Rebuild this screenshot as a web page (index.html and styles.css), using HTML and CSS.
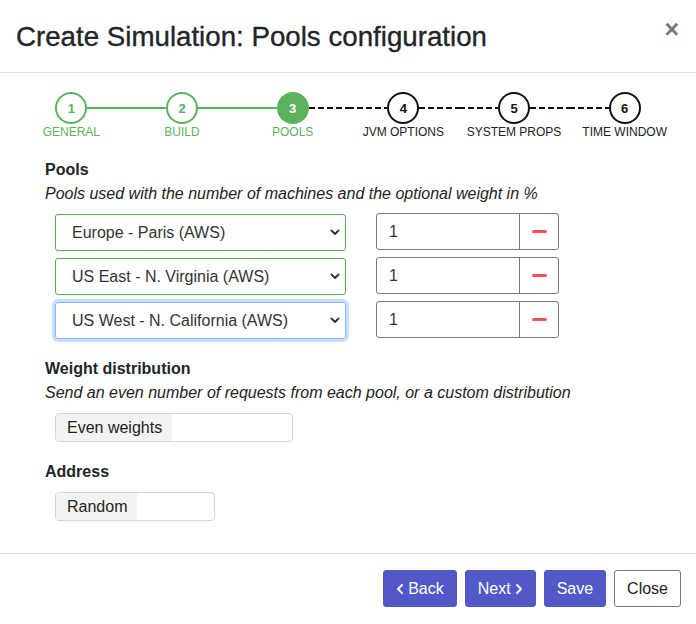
FILE: index.html
```html
<!DOCTYPE html>
<html>
<head>
<meta charset="utf-8">
<link rel="stylesheet" href="styles.css">
</head>
<body>
<div class="modal">
  <div class="modal-header">
    <h1 class="modal-title">Create Simulation: Pools configuration</h1>
    <span class="close">×</span>
  </div>
  <div class="modal-body">
    <div class="stepper">
      <div class="step done">
        <div class="track"><span class="ln none"></span><span class="circle">1</span><span class="ln solid"></span></div>
        <div class="label">GENERAL</div>
      </div>
      <div class="step done">
        <div class="track"><span class="ln solid"></span><span class="circle">2</span><span class="ln solid"></span></div>
        <div class="label">BUILD</div>
      </div>
      <div class="step active">
        <div class="track"><span class="ln solid"></span><span class="circle">3</span><span class="ln dash"></span></div>
        <div class="label">POOLS</div>
      </div>
      <div class="step">
        <div class="track"><span class="ln dash"></span><span class="circle">4</span><span class="ln dash"></span></div>
        <div class="label">JVM OPTIONS</div>
      </div>
      <div class="step">
        <div class="track"><span class="ln dash"></span><span class="circle">5</span><span class="ln dash"></span></div>
        <div class="label">SYSTEM PROPS</div>
      </div>
      <div class="step">
        <div class="track"><span class="ln dash"></span><span class="circle">6</span><span class="ln none"></span></div>
        <div class="label">TIME WINDOW</div>
      </div>
    </div>

    <div class="form">
      <div class="section-title">Pools</div>
      <div class="section-help">Pools used with the number of machines and the optional weight in %</div>
      <div class="pool-rows">
        <div class="pool-row">
          <div class="select valid"><span>Europe - Paris (AWS)</span><svg class="chev" width="10" height="7" viewBox="0 0 10 7"><polyline points="1.5,1.5 5,5 8.5,1.5" fill="none" stroke="#333" stroke-width="1.8" stroke-linecap="round" stroke-linejoin="round"/></svg></div>
          <div class="input-group"><div class="num">1</div><div class="remove"><span class="minus"></span></div></div>
        </div>
        <div class="pool-row">
          <div class="select valid"><span>US East - N. Virginia (AWS)</span><svg class="chev" width="10" height="7" viewBox="0 0 10 7"><polyline points="1.5,1.5 5,5 8.5,1.5" fill="none" stroke="#333" stroke-width="1.8" stroke-linecap="round" stroke-linejoin="round"/></svg></div>
          <div class="input-group"><div class="num">1</div><div class="remove"><span class="minus"></span></div></div>
        </div>
        <div class="pool-row">
          <div class="select focus"><span>US West - N. California (AWS)</span><svg class="chev" width="10" height="7" viewBox="0 0 10 7"><polyline points="1.5,1.5 5,5 8.5,1.5" fill="none" stroke="#333" stroke-width="1.8" stroke-linecap="round" stroke-linejoin="round"/></svg></div>
          <div class="input-group"><div class="num">1</div><div class="remove"><span class="minus"></span></div></div>
        </div>
      </div>

      <div class="section-title mt">Weight distribution</div>
      <div class="section-help">Send an even number of requests from each pool, or a custom distribution</div>
      <div class="segment seg-weights"><span class="seg-active">Even weights</span></div>

      <div class="section-title mt2">Address</div>
      <div class="segment seg-address"><span class="seg-active">Random</span></div>
    </div>
  </div>
  <div class="modal-footer">
    <button class="btn primary"><svg class="bchev" width="8" height="12" viewBox="0 0 8 12"><polyline points="6,2 2,6 6,10" fill="none" stroke="#fff" stroke-width="2" stroke-linecap="round" stroke-linejoin="round"/></svg>Back</button>
    <button class="btn primary">Next<svg class="bchev right" width="8" height="12" viewBox="0 0 8 12"><polyline points="2,2 6,6 2,10" fill="none" stroke="#fff" stroke-width="2" stroke-linecap="round" stroke-linejoin="round"/></svg></button>
    <button class="btn primary">Save</button>
    <button class="btn outline">Close</button>
  </div>
</div>
</body>
</html>
```
FILE: styles.css
```css
* { box-sizing: border-box; }
html, body { margin: 0; padding: 0; background: #fff; }
body {
  font-family: "Liberation Sans", Arial, sans-serif;
  color: #212529;
  font-size: 16px;
}
.modal { width: 696px; height: 624px; display: flex; flex-direction: column; }
.modal-header {
  display: flex;
  justify-content: space-between;
  align-items: flex-start;
  padding: 20px 16px 18px 16px;
  border-bottom: 1px solid #dee2e6;
}
.modal-title {
  margin: 0;
  font-size: 27.7px;
  line-height: 34px;
  font-weight: 400;
  color: #212529;
  -webkit-text-stroke: 0.35px #212529;
}
.close {
  font-size: 25px;
  line-height: 26px;
  font-weight: 700;
  color: #777;
  margin-top: -4px;
  margin-right: 1px;
}
.modal-body { flex: 1; padding: 19px 16px 0 16px; }
.stepper { display: grid; grid-template-columns: repeat(6, 1fr); }
.step { display: flex; flex-direction: column; align-items: center; }
.track { display: flex; align-items: center; width: 100%; }
.ln { flex: 1; height: 2px; }
.ln.solid { background: #5cb25c; }
.ln.dash { background: repeating-linear-gradient(to right, #111 0 6px, transparent 6px 9px); }
.circle {
  width: 32px; height: 32px;
  border-radius: 50%;
  border: 2px solid #111;
  display: flex; align-items: center; justify-content: center;
  font-size: 13px; font-weight: 700;
  color: #111;
}
.step.done .circle { border-color: #5cb25c; color: #5cb25c; }
.step.active .circle { border-color: #5cb25c; background: #5cb25c; color: #fff; }
.label { font-size: 12px; line-height: 14px; margin-top: 1px; color: #222; }
.step.done .label, .step.active .label { color: #5cb25c; }

.form { padding: 19px 0 0 29px; }
.section-title { font-weight: 700; font-size: 16px; line-height: 24px; }
.section-help { font-style: italic; font-size: 16px; line-height: 24px; color: #222; }
.mt { margin-top: 18px; }
.mt2 { margin-top: 18px; }
.pool-rows { display: flex; flex-direction: column; gap: 7px; margin-top: 8px; padding-left: 10px; }
.pool-row { display: flex; gap: 30px; align-items: center; }
.select {
  width: 291px; height: 37px;
  border: 1px solid #4fb04f;
  border-radius: 3px;
  display: flex; align-items: center; justify-content: space-between;
  padding: 0 5px 0 16px;
  font-size: 16px;
  color: #333;
}
.select.focus { border-color: #86b7fe; box-shadow: 0 0 0 3px rgba(13, 110, 253, 0.22); }
.input-group {
  width: 183px; height: 37px;
  border: 1px solid #7a7a7a;
  border-radius: 3px;
  display: flex;
  margin-top: -2px;
}
.num { flex: 1; display: flex; align-items: center; padding-left: 12px; font-size: 16px; color: #333; }
.remove { width: 39px; border-left: 1px solid #7a7a7a; display: flex; align-items: center; justify-content: center; }
.minus { width: 15px; height: 3px; border-radius: 2px; background: #ef5350; }

.segment {
  margin: 8px 0 0 10px;
  height: 29px;
  border: 1px solid #d6d6d6;
  border-radius: 4px;
  display: flex;
  overflow: hidden;
}
.seg-weights { width: 238px; }
.seg-address { width: 160px; }
.seg-active { background: #f3f3f3; padding: 0 10px 0 11px; display: flex; align-items: center; font-size: 16px; color: #222; }

.modal-footer {
  border-top: 1px solid #dee2e6;
  padding: 16px 15px 17px 16px;
  display: flex; justify-content: flex-end; gap: 8px;
}
.btn {
  height: 37px;
  font-family: "Liberation Sans", Arial, sans-serif;
  font-size: 16px;
  border-radius: 3px;
  padding: 0 12px;
  display: flex; align-items: center;
  cursor: pointer;
}
.btn.primary { background: #5358c9; border: 1px solid #5358c9; color: #fff; }
.btn.outline { background: #fff; border: 1px solid #777; color: #212529; }
.bchev { margin-right: 4px; }
.bchev.right { margin-right: 0; margin-left: 4px; }
```
